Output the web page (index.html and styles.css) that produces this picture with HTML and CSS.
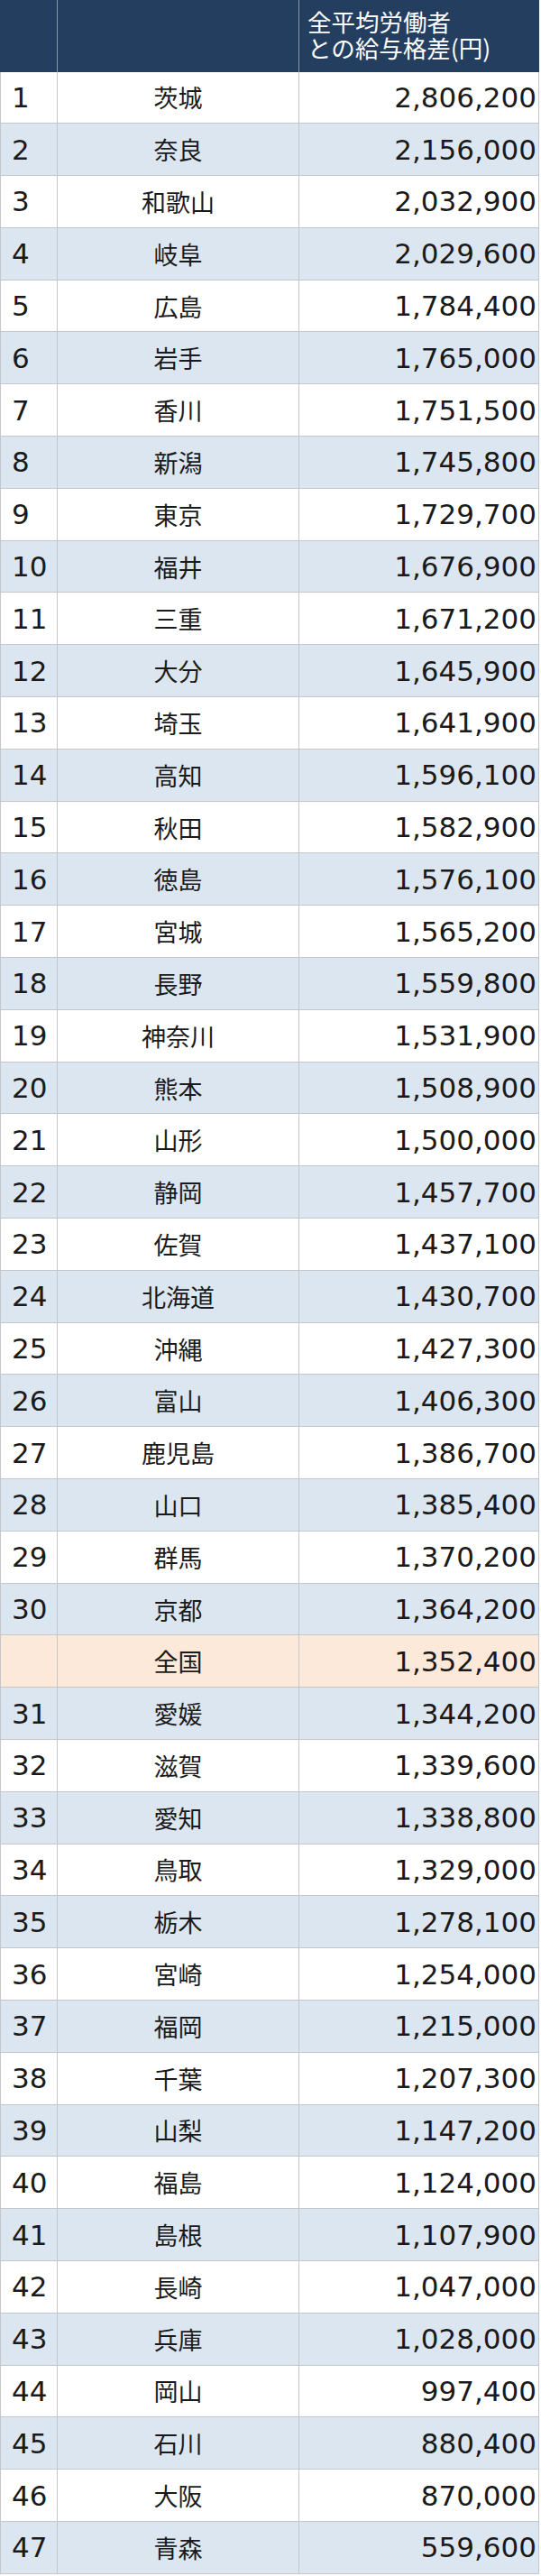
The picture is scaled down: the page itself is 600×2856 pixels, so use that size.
FILE: index.html
```html
<!DOCTYPE html>
<html lang="ja">
<head>
<meta charset="utf-8">
<title>全平均労働者との給与格差</title>
<link rel="stylesheet" href="styles.css">
</head>
<body>
<table class="ranking">
  <thead>
    <tr class="head">
      <th class="c-rank"></th>
      <th class="c-name"></th>
      <th class="c-val"><span class="head-line">全平均労働者</span><span class="head-line">との給与格差(円)</span></th>
    </tr>
  </thead>
  <tbody>
    <tr><td class="rank">1</td><td class="name">茨城</td><td class="val">2,806,200</td></tr>
    <tr><td class="rank">2</td><td class="name">奈良</td><td class="val">2,156,000</td></tr>
    <tr><td class="rank">3</td><td class="name">和歌山</td><td class="val">2,032,900</td></tr>
    <tr><td class="rank">4</td><td class="name">岐阜</td><td class="val">2,029,600</td></tr>
    <tr><td class="rank">5</td><td class="name">広島</td><td class="val">1,784,400</td></tr>
    <tr><td class="rank">6</td><td class="name">岩手</td><td class="val">1,765,000</td></tr>
    <tr><td class="rank">7</td><td class="name">香川</td><td class="val">1,751,500</td></tr>
    <tr><td class="rank">8</td><td class="name">新潟</td><td class="val">1,745,800</td></tr>
    <tr><td class="rank">9</td><td class="name">東京</td><td class="val">1,729,700</td></tr>
    <tr><td class="rank">10</td><td class="name">福井</td><td class="val">1,676,900</td></tr>
    <tr><td class="rank">11</td><td class="name">三重</td><td class="val">1,671,200</td></tr>
    <tr><td class="rank">12</td><td class="name">大分</td><td class="val">1,645,900</td></tr>
    <tr><td class="rank">13</td><td class="name">埼玉</td><td class="val">1,641,900</td></tr>
    <tr><td class="rank">14</td><td class="name">高知</td><td class="val">1,596,100</td></tr>
    <tr><td class="rank">15</td><td class="name">秋田</td><td class="val">1,582,900</td></tr>
    <tr><td class="rank">16</td><td class="name">徳島</td><td class="val">1,576,100</td></tr>
    <tr><td class="rank">17</td><td class="name">宮城</td><td class="val">1,565,200</td></tr>
    <tr><td class="rank">18</td><td class="name">長野</td><td class="val">1,559,800</td></tr>
    <tr><td class="rank">19</td><td class="name">神奈川</td><td class="val">1,531,900</td></tr>
    <tr><td class="rank">20</td><td class="name">熊本</td><td class="val">1,508,900</td></tr>
    <tr><td class="rank">21</td><td class="name">山形</td><td class="val">1,500,000</td></tr>
    <tr><td class="rank">22</td><td class="name">静岡</td><td class="val">1,457,700</td></tr>
    <tr><td class="rank">23</td><td class="name">佐賀</td><td class="val">1,437,100</td></tr>
    <tr><td class="rank">24</td><td class="name">北海道</td><td class="val">1,430,700</td></tr>
    <tr><td class="rank">25</td><td class="name">沖縄</td><td class="val">1,427,300</td></tr>
    <tr><td class="rank">26</td><td class="name">富山</td><td class="val">1,406,300</td></tr>
    <tr><td class="rank">27</td><td class="name">鹿児島</td><td class="val">1,386,700</td></tr>
    <tr><td class="rank">28</td><td class="name">山口</td><td class="val">1,385,400</td></tr>
    <tr><td class="rank">29</td><td class="name">群馬</td><td class="val">1,370,200</td></tr>
    <tr><td class="rank">30</td><td class="name">京都</td><td class="val">1,364,200</td></tr>
    <tr class="national"><td class="rank"></td><td class="name">全国</td><td class="val">1,352,400</td></tr>
    <tr><td class="rank">31</td><td class="name">愛媛</td><td class="val">1,344,200</td></tr>
    <tr><td class="rank">32</td><td class="name">滋賀</td><td class="val">1,339,600</td></tr>
    <tr><td class="rank">33</td><td class="name">愛知</td><td class="val">1,338,800</td></tr>
    <tr><td class="rank">34</td><td class="name">鳥取</td><td class="val">1,329,000</td></tr>
    <tr><td class="rank">35</td><td class="name">栃木</td><td class="val">1,278,100</td></tr>
    <tr><td class="rank">36</td><td class="name">宮崎</td><td class="val">1,254,000</td></tr>
    <tr><td class="rank">37</td><td class="name">福岡</td><td class="val">1,215,000</td></tr>
    <tr><td class="rank">38</td><td class="name">千葉</td><td class="val">1,207,300</td></tr>
    <tr><td class="rank">39</td><td class="name">山梨</td><td class="val">1,147,200</td></tr>
    <tr><td class="rank">40</td><td class="name">福島</td><td class="val">1,124,000</td></tr>
    <tr><td class="rank">41</td><td class="name">島根</td><td class="val">1,107,900</td></tr>
    <tr><td class="rank">42</td><td class="name">長崎</td><td class="val">1,047,000</td></tr>
    <tr><td class="rank">43</td><td class="name">兵庫</td><td class="val">1,028,000</td></tr>
    <tr><td class="rank">44</td><td class="name">岡山</td><td class="val">997,400</td></tr>
    <tr><td class="rank">45</td><td class="name">石川</td><td class="val">880,400</td></tr>
    <tr><td class="rank">46</td><td class="name">大阪</td><td class="val">870,000</td></tr>
    <tr><td class="rank">47</td><td class="name">青森</td><td class="val">559,600</td></tr>
  </tbody>
</table>
</body>
</html>
```

FILE: styles.css
```css
html, body {
  margin: 0;
  padding: 0;
  background: #ffffff;
}

.ranking {
  width: 598px;
  table-layout: fixed;
  border-collapse: separate;
  border-spacing: 0;
  color: #1a1a1a;
}

.ranking th,
.ranking td {
  box-sizing: border-box;
  padding: 0;
  border-right: 1px solid #c3c6cb;
}

.ranking th:first-child,
.ranking td:first-child {
  border-left: 1px solid #c3c6cb;
}

.ranking .c-rank { width: 64px; }
.ranking .c-name { width: 268px; }
.ranking .c-val  { width: 266px; }

.ranking .head th {
  height: 79.5px;
  background: #243e60;
  color: #ffffff;
  font-family: "Noto Sans CJK JP", sans-serif;
  font-weight: normal;
  font-size: 26.5px;
  line-height: 29px;
  text-align: left;
  vertical-align: top;
  padding: 8.5px 0 0 9px;
  border-right-color: #8a97a8;
}

.ranking .head th:first-child {
  border-left-color: #243e60;
}

.ranking .head th:last-child {
  border-right-color: #243e60;
}

.head-line {
  display: block;
  height: 29px;
  white-space: nowrap;
}

.ranking tbody tr {
  height: 57.8px;
}

.ranking tbody td {
  border-bottom: 1px solid #c3c6cb;
  vertical-align: middle;
  white-space: nowrap;
}

.ranking tbody tr:nth-child(even) td {
  background: #dce6f1;
}

.ranking tbody tr.national td {
  background: #fde9d9;
}

.ranking .rank {
  font-family: "DejaVu Sans", sans-serif;
  font-size: 31px;
  padding-left: 12px;
  text-align: left;
}

.ranking .name {
  font-family: "Noto Sans CJK JP", sans-serif;
  font-size: 27px;
  text-align: center;
}

.ranking .val {
  font-family: "DejaVu Sans", sans-serif;
  font-size: 31px;
  text-align: right;
  padding-right: 2px;
}
```
